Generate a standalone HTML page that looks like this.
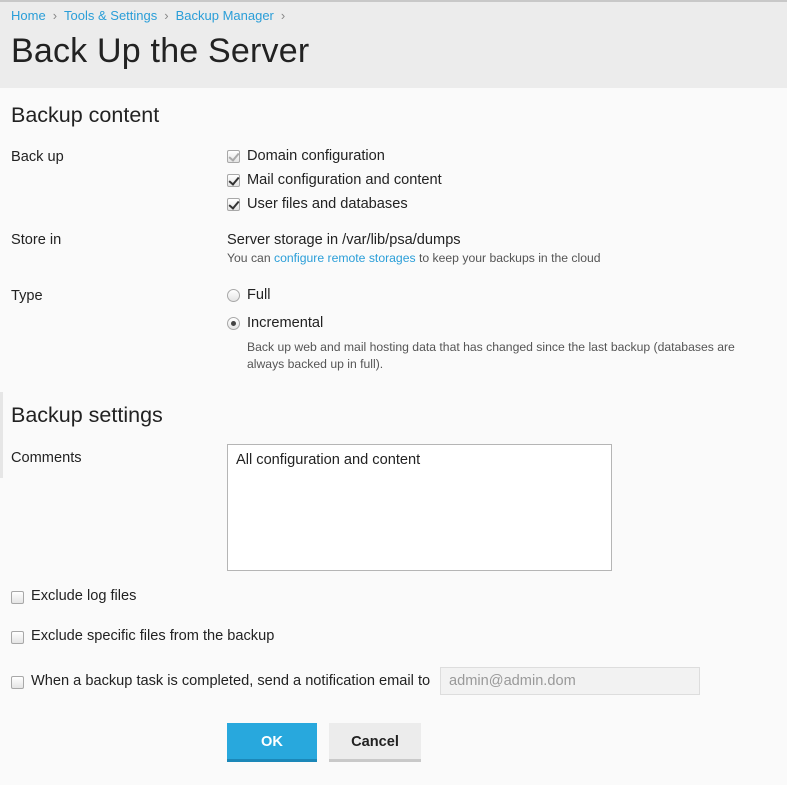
<!DOCTYPE html>
<html><head><meta charset="utf-8"><style>
*{box-sizing:border-box;margin:0;padding:0}
body{width:787px;height:785px;background:#fafafa;font-family:"Liberation Sans",sans-serif;color:#222;font-size:14.6px;position:relative;overflow:hidden}
.a{position:absolute;white-space:nowrap}
.hdr{position:absolute;left:0;top:0;width:787px;height:88px;background:#ececec;border-top:2px solid #c8c8c8}
.bc{color:#2a9ed8;font-size:13px}
.sep{color:#888;margin:0 7px}
h1{font-weight:normal;font-size:34px;color:#222;letter-spacing:0.2px}
h2{font-weight:normal;font-size:21.5px;color:#222}
.cb{position:absolute;width:13px;height:13px;border:1px solid #a8a8a8;border-radius:2px;background:linear-gradient(#fff,#e4e4e4)}
.cb.on::after{content:"";position:absolute;left:3px;top:0px;width:4px;height:8px;border:solid #333;border-width:0 2px 2px 0;transform:rotate(40deg)}
.cb.dis::after{border-color:#aaa}
.rd{position:absolute;width:13px;height:13px;border:1px solid #a8a8a8;border-radius:50%;background:linear-gradient(#fff,#e4e4e4)}
.rd.on::after{content:"";position:absolute;left:3px;top:3px;width:5px;height:5px;border-radius:50%;background:#444}
.small{font-size:12.2px;color:#555}
</style></head><body>
<div class="hdr"></div>
<div class="a bc" style="left:11px;top:8px">Home<span class="sep">›</span>Tools &amp; Settings<span class="sep">›</span>Backup Manager<span class="sep">›</span></div>
<h1 class="a" style="left:11px;top:32px">Back Up the Server</h1>
<h2 class="a" style="left:11px;top:103px">Backup content</h2>
<div class="a" style="left:11px;top:149px">Back up</div>
<div class="cb on dis" style="left:227px;top:150px"></div><div class="a" style="left:247px;top:148px">Domain configuration</div>
<div class="cb on" style="left:227px;top:174px"></div><div class="a" style="left:247px;top:172px">Mail configuration and content</div>
<div class="cb on" style="left:227px;top:198px"></div><div class="a" style="left:247px;top:196px">User files and databases</div>
<div class="a" style="left:11px;top:232px">Store in</div>
<div class="a" style="left:227px;top:232px">Server storage in /var/lib/psa/dumps</div>
<div class="a small" style="left:227px;top:251px">You can <span style="color:#2a9ed8">configure remote storages</span> to keep your backups in the cloud</div>
<div class="a" style="left:11px;top:288px">Type</div>
<div class="rd" style="left:227px;top:289px"></div><div class="a" style="left:247px;top:287px">Full</div>
<div class="rd on" style="left:227px;top:317px"></div><div class="a" style="left:247px;top:315px">Incremental</div>
<div class="a small" style="left:247px;top:339px;line-height:17px">Back up web and mail hosting data that has changed since the last backup (databases are<br>always backed up in full).</div>
<div class="a" style="left:0;top:392px;width:3px;height:86px;background:#e6e6e6"></div>
<h2 class="a" style="left:11px;top:403px">Backup settings</h2>
<div class="a" style="left:11px;top:450px">Comments</div>
<div class="a" style="left:227px;top:444px;width:385px;height:127px;border:1px solid #b5b5b5;background:#fff;padding:7px 8px">All configuration and content</div>
<div class="cb" style="left:11px;top:591px"></div><div class="a" style="left:31px;top:588px">Exclude log files</div>
<div class="cb" style="left:11px;top:631px"></div><div class="a" style="left:31px;top:628px">Exclude specific files from the backup</div>
<div class="cb" style="left:11px;top:676px"></div><div class="a" style="left:31px;top:673px">When a backup task is completed, send a notification email to</div>
<div class="a" style="left:440px;top:667px;width:260px;height:28px;background:#f2f2f2;border:1px solid #ddd;color:#999;padding:5px 8px">admin@admin.dom</div>
<div class="a" style="left:227px;top:723px;width:90px;height:39px;background:#28a8dd;border-bottom:3px solid #1b87b8;color:#fff;font-weight:bold;text-align:center;line-height:38px">OK</div>
<div class="a" style="left:329px;top:723px;width:92px;height:39px;background:#ececec;border-bottom:3px solid #c9c9c9;color:#222;font-weight:bold;text-align:center;line-height:38px">Cancel</div>
</body></html>
